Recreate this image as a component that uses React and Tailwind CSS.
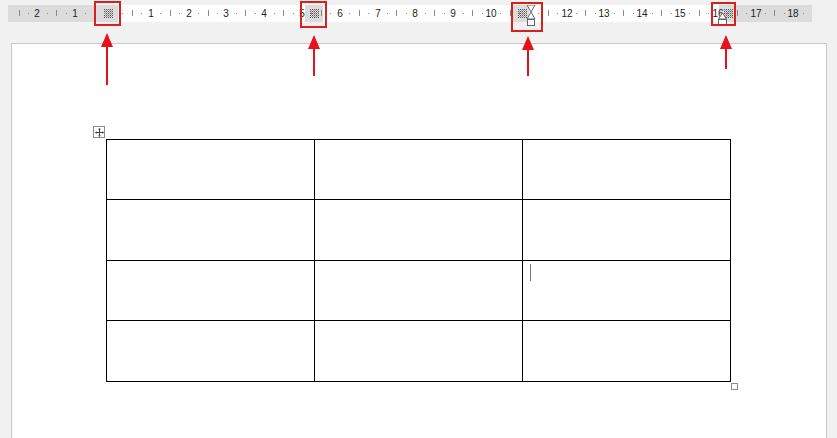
const CM = 37.8;
const ORIGIN = 105;

const GridMark = () => (
  <svg width="9" height="9" viewBox="0 0 9 9">
    {[0, 2, 4, 6, 8].map((y) =>
      [0, 2, 4, 6, 8].map((x) => (
        <rect key={`${x}-${y}`} x={x} y={y} width="1" height="1" fill="#555" />
      ))
    )}
    {[1, 3, 5, 7].map((y) =>
      [1, 3, 5, 7].map((x) => (
        <rect key={`b${x}-${y}`} x={x} y={y} width="1" height="1" fill="#999" />
      ))
    )}
  </svg>
);

const Arrow = ({ x, top, bottom }) => (
  <svg
    className="absolute"
    style={{ left: x - 7, top }}
    width="14"
    height={bottom - top}
    viewBox={`0 0 14 ${bottom - top}`}
  >
    <polygon points="7,0 1,14 13,14" fill="#e8101a" />
    <rect x="6" y="12" width="2" height={bottom - top - 12} fill="#e8101a" />
  </svg>
);

const Ruler = () => {
  const nums = [];
  for (let i = -2; i <= 18; i++) {
    if (i === 0 || i === 11) continue;
    nums.push(i);
  }
  const ticks = [];
  for (let i = -3; i <= 18; i++) {
    ticks.push({ x: ORIGIN + i * CM + CM * 0.25, big: false });
    ticks.push({ x: ORIGIN + i * CM + CM * 0.5, big: true });
    ticks.push({ x: ORIGIN + i * CM + CM * 0.75, big: false });
  }
  return (
    <div className="relative mt-[5px] ml-[8px] w-[804px] h-[17px] font-['Liberation_Sans',Arial,sans-serif] text-[10px] text-[#222]">
      {/* margin / column shading */}
      <div className="flex h-full">
        <div className="w-[88px] bg-[#dcdcdc]" />
        <div className="w-[22px] bg-[#dcdcdc] flex items-center justify-center pl-[2px]">
          <GridMark />
        </div>
        <div className="w-[187px] bg-white" />
        <div className="w-[18px] bg-[#dcdcdc] flex items-center justify-center">
          <GridMark />
        </div>
        <div className="w-[188px] bg-white" />
        <div className="w-[18px] bg-[#dcdcdc] flex items-center justify-start pl-[7px]">
          <GridMark />
        </div>
        <div className="w-[190px] bg-white" />
        <div className="flex-1 bg-[#dcdcdc] pl-[5px] flex items-center">
          <GridMark />
        </div>
      </div>
      {ticks.map((t, i) => {
        const left = Math.round(t.x);
        if (left < 2 || left > 800) return null;
        return (
          <div
            key={i}
            className="absolute w-px bg-[#8a8a8a]"
            style={{ left, top: t.big ? 5 : 8, height: t.big ? 6 : 1 }}
          />
        );
      })}
      {nums.map((n) => (
        <span
          key={n}
          className="absolute top-[2px] leading-[13px] w-[16px] text-center"
          style={{ left: Math.round(ORIGIN + n * CM) - 8 }}
        >
          {Math.abs(n)}
        </span>
      ))}
      <svg className="absolute left-[518px] top-0" width="10" height="24" viewBox="0 0 10 24">
        <polygon points="1,0 9,0 5,7" fill="white" stroke="#666" strokeWidth="1" />
        <polygon points="5,7 1,14 9,14" fill="white" stroke="#666" strokeWidth="1" />
        <rect x="1.5" y="14.5" width="7" height="6" fill="white" stroke="#666" />
      </svg>
      <svg className="absolute left-[710px] top-[8px]" width="10" height="16" viewBox="0 0 10 16">
        <polygon points="4.5,0 0.5,6 8.5,6" fill="white" stroke="#666" />
        <rect x="0.5" y="6.5" width="8" height="6" fill="white" stroke="#666" />
      </svg>
    </div>
  );
};

export default function App() {
  const rows = [60, 61, 60, 61];
  return (
    <div className="relative w-[837px] h-[438px] bg-[#f1f1f1] overflow-hidden">
      <Ruler />
      <div className="mt-[21px] ml-[11px] w-[816px] h-[420px] bg-white border border-[#c8c8c8] pt-[95px] pl-[94px]">
        <div className="relative w-[625px]">
          <div className="absolute -left-[13px] -top-[13px] w-[12px] h-[12px] border border-[#8c8c8c] bg-white flex items-center justify-center">
            <svg width="9" height="9" viewBox="0 0 9 9">
              <path d="M4.5 1V8M1 4.5H8" stroke="#444" strokeWidth="1" />
              <path d="M4.5 0L3 1.5H6ZM4.5 9L3 7.5H6ZM0 4.5L1.5 3V6ZM9 4.5L7.5 3V6Z" fill="#444" />
            </svg>
          </div>
          <table className="border-collapse w-[625px] table-fixed">
            <tbody>
              {rows.map((h, r) => (
                <tr key={r} style={{ height: h }}>
                  {[0, 1, 2].map((c) => (
                    <td key={c} className="border border-black p-0 align-top">
                      {r === 2 && c === 2 ? (
                        <div className="ml-[7px] mt-[3px] w-px h-[17px] bg-[#777]" />
                      ) : null}
                    </td>
                  ))}
                </tr>
              ))}
            </tbody>
          </table>
          <div className="absolute -right-[7px] -bottom-[8px] w-[7px] h-[7px] border border-[#8c8c8c] bg-white" />
        </div>
      </div>

      <div className="absolute left-[94px] top-[1px] w-[27px] h-[25px] border-2 border-[#d8201c]" />
      <div className="absolute left-[300px] top-[1px] w-[27px] h-[27px] border-2 border-[#d8201c]" />
      <div className="absolute left-[511px] top-[2px] w-[32px] h-[30px] border-2 border-[#d8201c]" />
      <div className="absolute left-[711px] top-[2px] w-[25px] h-[24px] border-2 border-[#d8201c]" />
      <Arrow x={107} top={33} bottom={85} />
      <Arrow x={314} top={35} bottom={76} />
      <Arrow x={528} top={36} bottom={76} />
      <Arrow x={726} top={35} bottom={69} />
    </div>
  );
}
